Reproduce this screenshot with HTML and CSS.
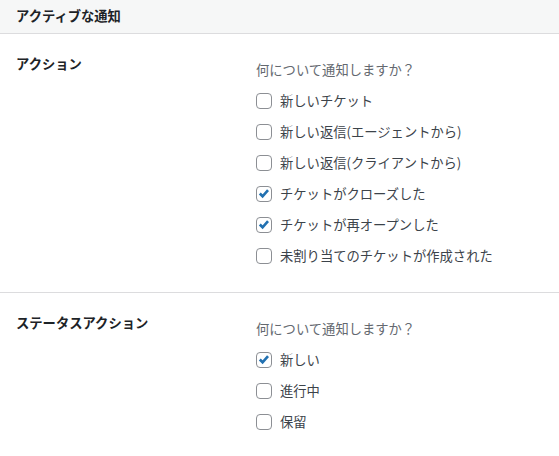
FILE: index.html
```html
<!DOCTYPE html>
<html lang="ja">
<head>
  <meta charset="UTF-8">
  <title>アクティブな通知</title>
  <link rel="stylesheet" href="styles.css">
</head>
<body>
<div class="panel">
  <div class="panel-head">アクティブな通知</div>

  <div class="section">
    <div class="section-label">アクション</div>
    <div class="section-body">
      <p class="desc">何について通知しますか？</p>
      <ul class="options">
        <li><span class="box"></span>新しいチケット</li>
        <li><span class="box"></span>新しい返信(エージェントから)</li>
        <li><span class="box"></span>新しい返信(クライアントから)</li>
        <li><span class="box checked"><svg viewBox="0 0 16 16"><path d="M3.2 8l3.2 3.2 6.2-7" /></svg></span>チケットがクローズした</li>
        <li><span class="box checked"><svg viewBox="0 0 16 16"><path d="M3.2 8l3.2 3.2 6.2-7" /></svg></span>チケットが再オープンした</li>
        <li><span class="box"></span>未割り当てのチケットが作成された</li>
      </ul>
    </div>
  </div>

  <div class="section">
    <div class="section-label">ステータスアクション</div>
    <div class="section-body">
      <p class="desc">何について通知しますか？</p>
      <ul class="options">
        <li><span class="box checked"><svg viewBox="0 0 16 16"><path d="M3.2 8l3.2 3.2 6.2-7" /></svg></span>新しい</li>
        <li><span class="box"></span>進行中</li>
        <li><span class="box"></span>保留</li>
      </ul>
    </div>
  </div>
</div>
</body>
</html>
```

FILE: styles.css
```css
* {
  margin: 0;
  padding: 0;
  box-sizing: border-box;
}

body {
  font-family: "Noto Sans CJK JP", "Liberation Sans", sans-serif;
  font-size: 13.3px;
  color: #3c434a;
  background: #fff;
}

ul {
  list-style: none;
}

.panel-head {
  height: 34px;
  padding: 6px 16px 0;
  line-height: 20px;
  font-weight: 600;
  color: #1d2327;
  background-color: #f6f7f7;
  border-bottom: 1px solid #dcdcde;
}

.section {
  display: flex;
  padding: 20px 16px 21px;
  border-bottom: 1px solid #dcdcde;
}

.section:last-child {
  border-bottom: none;
}

.section-label {
  width: 240px;
  flex-shrink: 0;
  line-height: 20px;
  font-weight: 600;
  color: #1d2327;
}

.section-body {
  padding-top: 6px;
}

.desc {
  line-height: 20px;
  color: #646970;
  margin-bottom: 5px;
}

.options li {
  display: flex;
  align-items: center;
  height: 31px;
}

.box {
  width: 16px;
  height: 16px;
  border: 1px solid #8c8f94;
  border-radius: 4px;
  margin-right: 8px;
  display: flex;
  align-items: center;
  justify-content: center;
}

.box svg {
  width: 15px;
  height: 15px;
  fill: none;
  stroke: #2271b1;
  stroke-width: 3;
}
```
